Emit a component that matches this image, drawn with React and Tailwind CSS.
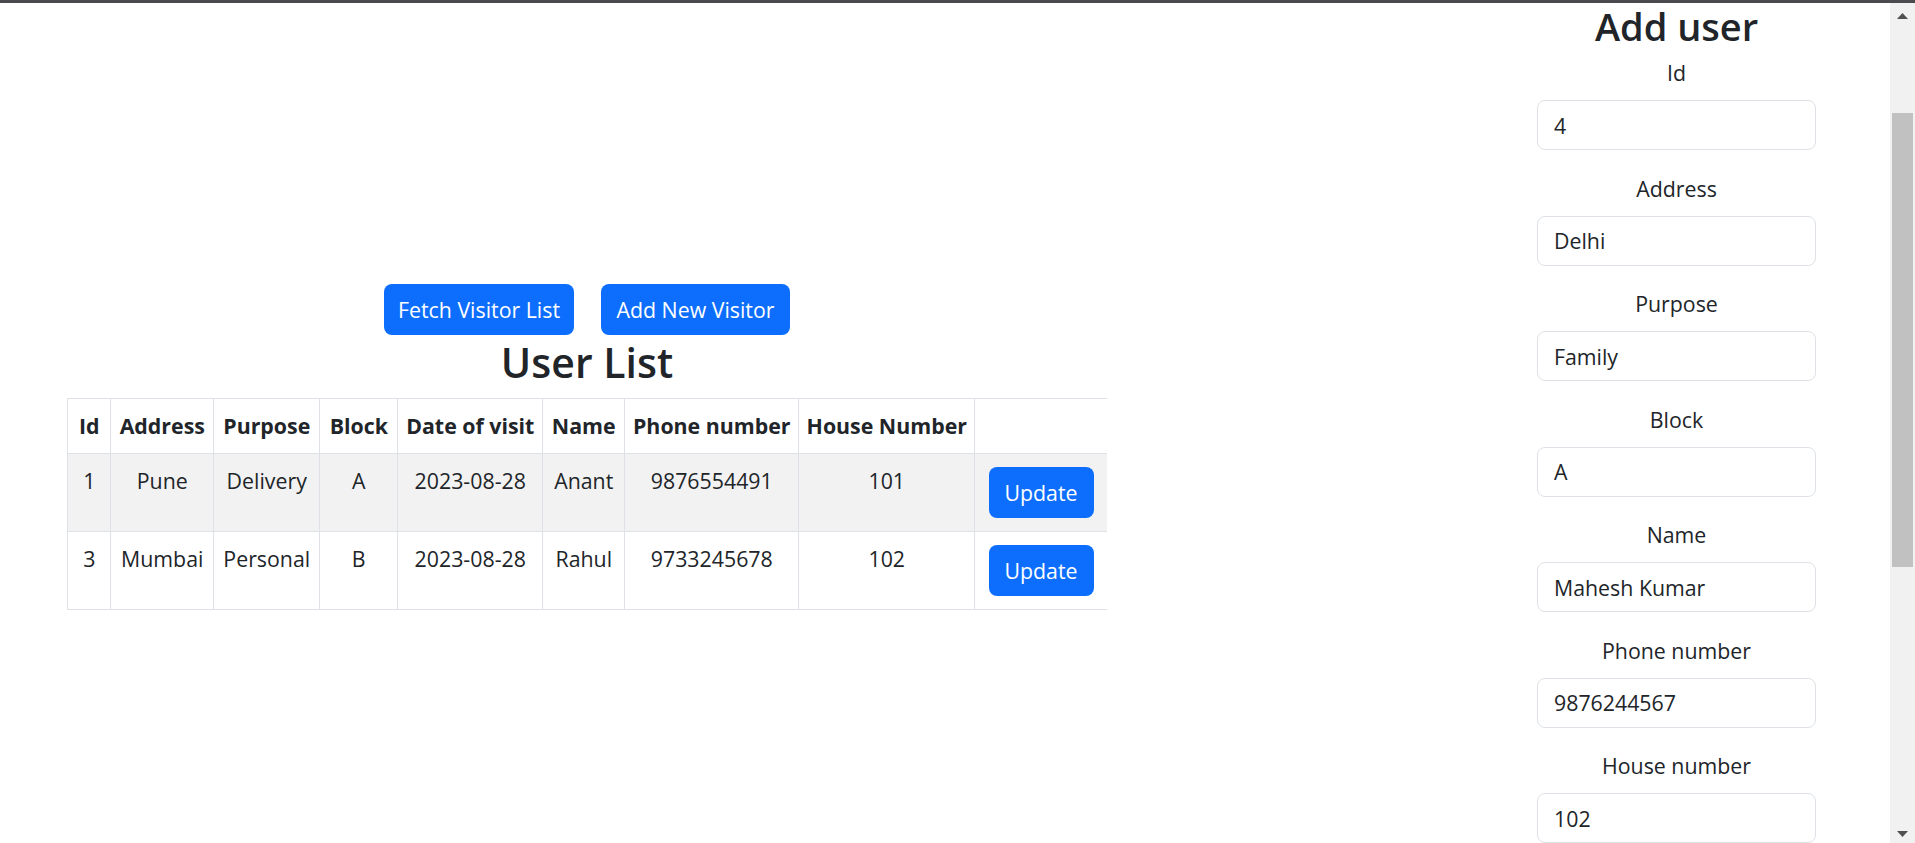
import React from "react";

const visitors = [
  { id: 1, address: "Pune", purpose: "Delivery", block: "A", date: "2023-08-28", name: "Anant", phone: "9876554491", house: "101" },
  { id: 3, address: "Mumbai", purpose: "Personal", block: "B", date: "2023-08-28", name: "Rahul", phone: "9733245678", house: "102" },
];

const columns = [
  { title: "Id", w: "w-[43px]" },
  { title: "Address", w: "w-[103px]" },
  { title: "Purpose", w: "w-[106px]" },
  { title: "Block", w: "w-[78px]" },
  { title: "Date of visit", w: "w-[145px]" },
  { title: "Name", w: "w-[82px]" },
  { title: "Phone number", w: "w-[174px]" },
  { title: "House Number", w: "w-[176px]" },
  { title: "", w: "w-[132px]" },
];

const fields = [
  { label: "Id", value: "4" },
  { label: "Address", value: "Delhi" },
  { label: "Purpose", value: "Family" },
  { label: "Block", value: "A" },
  { label: "Name", value: "Mahesh Kumar" },
  { label: "Phone number", value: "9876244567" },
  { label: "House number", value: "102" },
];

function ScrollBar() {
  return (
    <div className="w-[25px] h-full bg-[#f1f1f1] flex flex-col items-center shrink-0">
      {/* up arrow */}
      <svg width="11" height="6" viewBox="0 0 11 6" className="mt-[13px] shrink-0">
        <polygon points="0,6 5.5,0 11,6" fill="#505050" />
      </svg>
      {/* thumb */}
      <div className="mt-[94px] w-[21px] h-[454px] bg-[#c1c1c1] shrink-0" />
      <div className="flex-1" />
      {/* down arrow */}
      <svg width="11" height="6" viewBox="0 0 11 6" className="mb-[6px] shrink-0">
        <polygon points="0,0 11,0 5.5,6" fill="#505050" />
      </svg>
    </div>
  );
}

export default function App() {
  const cell = "border border-[#dee2e6] px-0 text-center";

  return (
    <div className="relative w-[1915px] h-[843px] overflow-hidden flex bg-white text-[#212529] font-['Open_Sans','Noto_Sans',sans-serif]">
      {/* browser edge over the page */}
      <div className="absolute top-0 left-0 right-0 h-[3px] bg-[#4b4b4f]" />

      <div className="flex-1 flex min-w-0">
        {/* Left: visitor list */}
        <div className="w-[1174px] shrink-0 pt-[284px] flex flex-col items-center">
          <div className="flex gap-[27px]">
            <button className="w-[190px] h-[51px] rounded-[8px] bg-[#0d6efd] text-white text-[21.33px]">
              Fetch Visitor List
            </button>
            <button className="w-[189px] h-[51px] rounded-[8px] bg-[#0d6efd] text-white text-[21.33px]">
              Add New Visitor
            </button>
          </div>

          <h2 className="text-[41px] font-semibold leading-[54px] mb-[9px]">User List</h2>

          <table className="table-fixed border-collapse w-[1039px] text-[21.33px] leading-[32px]">
            <thead>
              <tr className="h-[55px]">
                {columns.map((c, i) => (
                  <th
                    key={i}
                    className={`${cell} ${c.w} font-bold align-middle ${i === columns.length - 1 ? "border-r-0" : ""}`}
                  >
                    {c.title}
                  </th>
                ))}
              </tr>
            </thead>
            <tbody>
              {visitors.map((v, idx) => (
                <tr key={v.id} className={`h-[78px] ${idx === 0 ? "bg-[#f2f2f2]" : "bg-white"}`}>
                  {[v.id, v.address, v.purpose, v.block, v.date, v.name, v.phone, v.house].map((val, i) => (
                    <td key={i} className={`${cell} align-top pt-[11px]`}>
                      {val}
                    </td>
                  ))}
                  <td className={`${cell} align-middle border-r-0`}>
                    <button className="w-[105px] h-[51px] rounded-[8px] bg-[#0d6efd] text-white text-[21.33px]">
                      Update
                    </button>
                  </td>
                </tr>
              ))}
            </tbody>
          </table>
        </div>

        {/* Right: add user form */}
        <div className="ml-[363px] w-[279px] shrink-0 flex flex-col">
          <h2 className="text-[38px] font-semibold leading-[52px] text-center mb-[5px]">Add user</h2>
          {fields.map((f) => (
            <div key={f.label} className="flex flex-col">
              <label className="h-[32px] leading-[32px] text-[21.33px] text-center mb-[11px]">{f.label}</label>
              <input
                defaultValue={f.value}
                className="h-[50px] w-[279px] shrink-0 rounded-[8px] border border-[#dee2e6] px-[16px] text-[21.33px] text-[#212529] outline-none mb-[22.5px]"
              />
            </div>
          ))}
        </div>
      </div>

      <ScrollBar />
    </div>
  );
}
